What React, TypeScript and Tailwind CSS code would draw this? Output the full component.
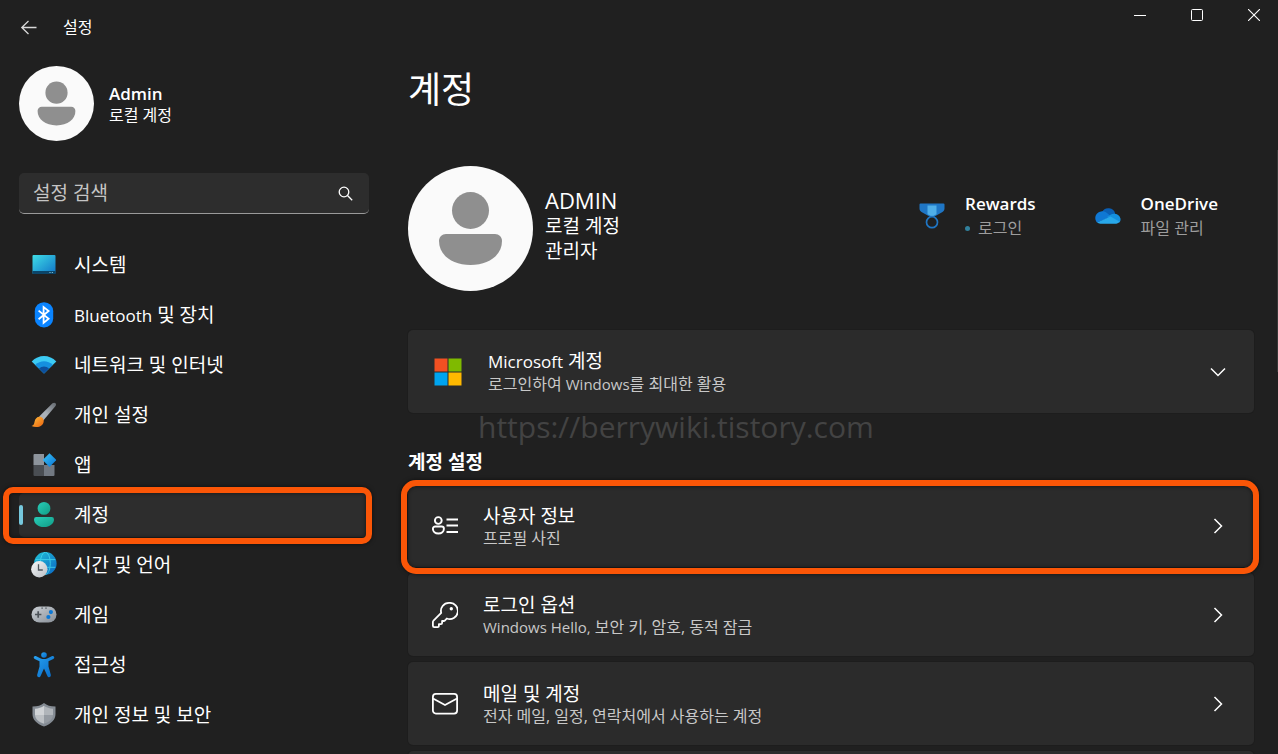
import type { ReactNode } from "react";

function SystemIcon() {
    return (
        <svg width="26" height="26" viewBox="0 0 26 26" aria-hidden="true">
            <defs>
                <linearGradient id="system" x1="0" y1="0" x2="1" y2="1">
                    <stop offset="0" stopColor="#3fdde6" />
                    <stop offset="1" stopColor="#1074c8" />
                </linearGradient>
            </defs>
            <rect x="1.5" y="3" width="23" height="19" rx="1" fill="url(#system)" />
            <path d="M1.5 19h23v2a1 1 0 0 1-1 1h-21a1 1 0 0 1-1-1z" fill="#0b4569" />
            <path d="M18.5 20h1v1h-1zM20.8 20h1v1h-1z" fill="#8fd3ea" />
        </svg>
    );
}

function BluetoothIcon() {
    return (
        <svg width="26" height="26" viewBox="0 0 26 26" aria-hidden="true">
            <rect x="3.8" y="0.2" width="18.4" height="25.3" rx="9" fill="#0a84ff" />
            <path d="M7.6 8.6l10 8.2-5 4.1V5l5 4-10 8.2" fill="none" stroke="#fff" strokeWidth="1.8" />
        </svg>
    );
}

function NetworkIcon() {
    return (
        <svg width="26" height="26" viewBox="0 0 26 26" aria-hidden="true">
            <path d="M0.7 9.5C7.5 2.1 18.5 2.1 25.3 9.5L13 21.5z" fill="#3ccbf4" />
            <path d="M4.3 12.9c4.9-5 12.5-5 17.4 0L13 21.5z" fill="#1590df" />
            <path d="M8 16.5c2.9-2.7 7.1-2.7 10 0l-5 5z" fill="#0d4f9c" />
        </svg>
    );
}

function BrushIcon() {
    return (
        <svg width="26" height="26" viewBox="0 0 26 26" aria-hidden="true">
            <defs>
                <linearGradient id="handle" x1="1" y1="0" x2="0.4" y2="0.6">
                    <stop offset="0" stopColor="#62676d" />
                    <stop offset="1" stopColor="#aab1b8" />
                </linearGradient>
                <linearGradient id="bristle" x1="0" y1="0" x2="1" y2="1">
                    <stop offset="0" stopColor="#ffbe3b" />
                    <stop offset="1" stopColor="#ea6310" />
                </linearGradient>
            </defs>
            <path d="M8.2 14.5L21.5 1.3c2.3-1.7 4.6.3 3 2.7L12.3 18.5z" fill="url(#handle)" />
            <path d="M0.5 24c1.800-.5 2.700-1.600 3-4 .5-4 3.500-6 6.500-5 3 1.200 3.500 4.700 1.700 7.200-2.400 3.400-7.700 3.600-11.200 1.800z" fill="url(#bristle)" />
        </svg>
    );
}

function AppsIcon() {
    return (
        <svg width="26" height="26" viewBox="0 0 26 26" aria-hidden="true">
            <defs>
                <linearGradient id="diamond" x1="0" y1="0" x2="1" y2="1">
                    <stop offset="0" stopColor="#3cc5f7" />
                    <stop offset="1" stopColor="#0873d3" />
                </linearGradient>
            </defs>
            <path d="M3.5 2H13v11H2.500V3a1 1 0 0 1 1-1z" fill="#8d949c" />
            <path d="M2.5 13H13v11H3.500a1 1 0 0 1-1-1z" fill="#4a4e53" />
            <path d="M13 13h10.5v10a1 1 0 0 1-1 1H13z" fill="#727982" />
            <path d="M18.500 1.200l6.400 6.300a.9.900 0 0 1 0 1.100l-6.400 6.400-6.300-6.400a.9.900 0 0 1 0-1.100z" fill="url(#diamond)" />
        </svg>
    );
}

function AccountIcon() {
    return (
        <svg width="26" height="26" viewBox="0 0 26 26" aria-hidden="true">
            <defs>
                <linearGradient id="account" x1="0" y1="0" x2="1" y2="1">
                    <stop offset="0" stopColor="#29cdb8" />
                    <stop offset="1" stopColor="#109c86" />
                </linearGradient>
            </defs>
            <circle cx="13" cy="6.4" r="6.4" fill="url(#account)" />
            <path d="M5.5 15h15a2.400 2.400 0 0 1 2.500 2.400c0 4-4.300 7.600-10 7.600S3 21.400 3 17.400A2.400 2.400 0 0 1 5.500 15z" fill="url(#account)" />
        </svg>
    );
}

function TimeIcon() {
    return (
        <svg width="26" height="26" viewBox="0 0 26 26" aria-hidden="true">
            <defs>
                <linearGradient id="globe" x1="0" y1="0" x2="1" y2="1">
                    <stop offset="0" stopColor="#22c3d8" />
                    <stop offset="1" stopColor="#0a66c4" />
                </linearGradient>
                <linearGradient id="clock" x1="0" y1="0" x2="1" y2="1">
                    <stop offset="0" stopColor="#f7f8f9" />
                    <stop offset="1" stopColor="#b9bec4" />
                </linearGradient>
            </defs>
            <circle cx="14.3" cy="11.4" r="11.3" fill="url(#globe)" />
            <g fill="none" stroke="#45d8ee" strokeWidth="1" opacity=".8">
                <path d="M4.5 7.6h19.8M4.5 15.3h19.8" />
                <ellipse cx="14.3" cy="11.4" rx="5" ry="11.2" />
            </g>
            <circle cx="8.3" cy="17.2" r="8.2" fill="url(#clock)" />
            <path d="M7.5 12.2V18h4.3" fill="none" stroke="#4f565d" strokeWidth="1.3" />
        </svg>
    );
}

function GameIcon() {
    return (
        <svg width="26" height="26" viewBox="0 0 26 26" aria-hidden="true">
            <defs>
                <linearGradient id="pad" x1="0" y1="0" x2="1" y2="1">
                    <stop offset="0" stopColor="#ccd1d6" />
                    <stop offset="1" stopColor="#878e96" />
                </linearGradient>
            </defs>
            <rect x="0.5" y="4.5" width="25" height="16" rx="8" fill="url(#pad)" />
            <path d="M7.2 9.3v6.4M4 12.5h6.400" stroke="#4d5359" strokeWidth="1.7" />
            <circle cx="19.9" cy="10.1" r="2.1" fill="#0b78d6" />
            <circle cx="17.4" cy="15" r="2.1" fill="#0b78d6" />
            <path d="M10.5 5.500h1.200v1.200h-1.200zM14.400 5.500h1.200v1.200h-1.200z" fill="#3e4449" />
        </svg>
    );
}

function AccessibilityIcon() {
    return (
        <svg width="26" height="26" viewBox="0 0 26 26" aria-hidden="true">
            <defs>
                <linearGradient id="person" x1="0" y1="0" x2="1" y2="1">
                    <stop offset="0" stopColor="#28a2f2" />
                    <stop offset="1" stopColor="#0669c6" />
                </linearGradient>
            </defs>
            <circle cx="13" cy="3" r="2.8" fill="url(#person)" />
            <path d="M4.800 4.100l5 2.300c2 .7 4.400.7 6.400 0l5-2.300c2-.6 2.900 2 1.100 2.900l-4.800 2.200v5.300l2.300 8.300c.5 2.700-2.600 3.400-3.400 1.200L13 16.500l-3.400 7.500c-.8 2.200-3.900 1.500-3.400-1.200l2.300-8.300V9.200L3.700 7c-1.800-.9-.9-3.500 1.100-2.900z" fill="url(#person)" />
        </svg>
    );
}

function ShieldIcon() {
    return (
        <svg width="26" height="26" viewBox="0 0 26 26" aria-hidden="true">
            <path d="M13 1c2.800 2.400 6.500 3.500 11.500 3.500V12c0 5.500-4 9.800-11.500 12.500C5.500 21.800 1.500 17.500 1.500 12V4.500C6.500 4.500 10.200 3.400 13 1z" fill="#858c94" />
            <path d="M13 3.800V13H4V6.800c3.500-.2 6.500-1.200 9-3z" fill="#d0d3d6" />
            <path d="M13 3.800V13h9V6.800c-3.500-.2-6.500-1.200-9-3z" fill="#b0b5ba" />
            <path d="M4 13h9v8.800C7.500 19.800 4.300 17 4 13z" fill="#bcc0c4" />
            <path d="M22 13h-9v8.800c5.500-2 8.700-4.800 9-8.800z" fill="#959ba2" />
        </svg>
    );
}

function ProfileIcon() {
    return (
        <svg width="26" height="26" viewBox="0 0 26 26" fill="none" stroke="#fff" strokeWidth="1.9" aria-hidden="true">
            <circle cx="6.3" cy="7.5" r="3.4" />
            <path d="M3.200 13.500h6.400a2.300 2.300 0 0 1 2.300 2.300c0 2.800-2.300 4.700-5.500 4.700S.9 18.600.9 15.800a2.300 2.300 0 0 1 2.300-2.300z" />
            <path d="M14.5 6.500H26M14.500 12.500H26M14.500 19H26" />
        </svg>
    );
}

function KeyIcon() {
    return (
        <svg width="26" height="26" viewBox="0 0 26 26" fill="none" stroke="#fff" strokeWidth="1.8" strokeLinejoin="round" aria-hidden="true">
            <path d="M17 .9a8 8 0 0 0-7.800 10L1.500 18.700a1.800 1.800 0 0 0-.6 1.300v3.800c0 .8.500 1.300 1.300 1.300h3.500c.7 0 1.200-.5 1.200-1.200v-1.700h2c.7 0 1.200-.5 1.200-1.200v-2h1.700c.4 0 .7-.1 1-.4l2-2.100A8.100 8.100 0 1 0 17 .9z" />
            <circle cx="19.3" cy="6.8" r="1.7" fill="#fff" stroke="none" />
        </svg>
    );
}

function MailIcon() {
    return (
        <svg width="26" height="26" viewBox="0 0 26 26" fill="none" stroke="#fff" strokeWidth="1.8" aria-hidden="true">
            <rect x="0.9" y="2.9" width="24.2" height="19.7" rx="3" />
            <path d="M1 7.500l12 6.500 12-6.500" strokeLinejoin="round" />
        </svg>
    );
}

function MicrosoftLogo() {
    return (
        <svg width="28" height="28" viewBox="0 0 28 28" aria-hidden="true">
            <path d="M.5.5h13v13H.5z" fill="#f25022" />
            <path d="M14.500.5h13v13h-13z" fill="#7fba00" />
            <path d="M.5 14.500h13v13H.5z" fill="#00a4ef" />
            <path d="M14.500 14.500h13v13h-13z" fill="#ffb900" />
        </svg>
    );
}

function RewardsIcon() {
    return (
        <svg width="26" height="26" viewBox="0 0 26 26" aria-hidden="true">
            <path d="M1.5.5h23a1 1 0 0 1 1 1v4c0 1.500-.7 2.600-2 3.400l-8 4.600h-5l-8-4.600c-1.300-.8-2-1.900-2-3.400v-4a1 1 0 0 1 1-1z" fill="#1f76c5" />
            <path d="M8.500 2.500h9v8.700L13 13.500l-4.500-2.300z" fill="#4faee8" />
            <circle cx="13" cy="19.2" r="5.500" fill="#202020" stroke="#1f76c5" strokeWidth="1.7" />
        </svg>
    );
}

function OneDriveIcon() {
    return (
        <svg width="26" height="26" viewBox="0 0 26 26" aria-hidden="true">
            <path d="M7 9.200a7 7 0 0 1 13.200 1.600L16 16z" fill="#0a5fb4" />
            <path d="M6.200 8.500c3-.6 5 1 7 2.500l3 3L2 19.500C-1.600 15.500.8 9 6.200 8.500z" fill="#0f78d4" />
            <path d="M15.500 11.800c3.300-2.200 9-1 10 3.700.3 1.700-.2 3-1.200 4L12 14z" fill="#1490df" />
            <path d="M2 19.600l13.500-6.100 9.200 5.300a4.400 4.400 0 0 1-3.400 1.900H5.800A5.500 5.500 0 0 1 2 19.600z" fill="#28a8ea" />
        </svg>
    );
}

function Chevron({ down }: { down?: boolean }) {
    return (
        <svg width="16" height="16" viewBox="0 0 16 16" fill="none" stroke="#fff" strokeWidth="1.5" aria-hidden="true">
            <path d={down ? "M1 4.500l7 7 7-7" : "M4.500 1l7 7-7 7"} />
        </svg>
    );
}

function Avatar({ className }: { className: string }) {
    return (
        <svg className={className} viewBox="0 0 125 125" role="img" aria-label="프로필 사진">
            <circle cx="62.5" cy="62.5" r="62.5" fill="#fafafa" />
            <circle cx="62.5" cy="44.5" r="18.5" fill="#8f8f8f" />
            <path d="M38 68h49c4 0 7 3 7 7 0 14-13 24-31.500 24S31 89 31 75c0-4 3-7 7-7z" fill="#8f8f8f" />
        </svg>
    );
}

// Orange frame drawn around an item to call it out
function Highlight({ className }: { className: string }) {
    return (
        <span
            className={`absolute z-10 border-6 border-[#fb5607] shadow-[0_0_4px_rgba(0,0,0,0.6),inset_0_0_4px_rgba(0,0,0,0.6)] pointer-events-none ${className}`}
        />
    );
}

const navItems: { label: ReactNode; icon: ReactNode; active?: boolean }[] = [
    { label: "시스템", icon: <SystemIcon /> },
    { label: <><span className="text-[17px]">Bluetooth</span> 및 장치</>, icon: <BluetoothIcon /> },
    { label: "네트워크 및 인터넷", icon: <NetworkIcon /> },
    { label: "개인 설정", icon: <BrushIcon /> },
    { label: "앱", icon: <AppsIcon /> },
    { label: "계정", icon: <AccountIcon />, active: true },
    { label: "시간 및 언어", icon: <TimeIcon /> },
    { label: "게임", icon: <GameIcon /> },
    { label: "접근성", icon: <AccessibilityIcon /> },
    { label: "개인 정보 및 보안", icon: <ShieldIcon /> },
];

const settings: { title: string; detail: ReactNode; icon: ReactNode; highlighted?: boolean }[] = [
    { title: "사용자 정보", detail: "프로필 사진", icon: <ProfileIcon />, highlighted: true },
    { title: "로그인 옵션", detail: <><span className="text-[15px]">Windows Hello,</span> 보안 키, 암호, 동적 잠금</>, icon: <KeyIcon /> },
    { title: "메일 및 계정", detail: "전자 메일, 일정, 연락처에서 사용하는 계정", icon: <MailIcon /> },
];

function TitleBar() {
    return (
        <header className="flex justify-between items-start h-[54px] shrink-0 pl-[19px]">
            <div className="flex items-center h-[53px] gap-6">
                <button aria-label="뒤로" className="w-5 h-5">
                    <svg width="20" height="20" viewBox="0 0 20 20" fill="none" stroke="#d8d8d8" strokeWidth="1.3">
                        <path d="M17.500 10.500H2.800M9.500 4L2.800 10.500 9.500 17" />
                    </svg>
                </button>
                <span className="text-base leading-6">설정</span>
            </div>
            <div className="flex gap-[9px]">
                <button aria-label="최소화" className="flex justify-center items-center w-12 h-[30px]">
                    <svg width="12" height="12" viewBox="0 0 12 12"><path d="M0 6.500h12" stroke="#fff" /></svg>
                </button>
                <button aria-label="최대화" className="flex justify-center items-center w-12 h-[30px]">
                    <svg width="12" height="12" viewBox="0 0 12 12"><rect x=".5" y=".5" width="11" height="11" rx="1" fill="none" stroke="#fff" /></svg>
                </button>
                <button aria-label="닫기" className="flex justify-center items-center w-12 h-[30px]">
                    <svg width="12" height="12" viewBox="0 0 12 12"><path d="M0 0l12 12M12 0L0 12" stroke="#fff" strokeWidth="1.1" /></svg>
                </button>
            </div>
        </header>
    );
}

function Sidebar() {
    return (
        <aside className="w-[350px] shrink-0 pt-3">
            <div className="flex items-center gap-[15px]">
                <Avatar className="w-[75px] h-[75px]" />
                <div>
                    <p className="text-[17px] leading-[22px] font-semibold">Admin</p>
                    <p className="text-base leading-5">로컬 계정</p>
                </div>
            </div>

            {/* Search */}
            <div className="flex items-center mt-8 h-[41px] pl-[14px] pr-4 bg-[#2d2d2d] border-b border-[#9a9a9a] rounded-[5px]">
                <input
                    type="text"
                    aria-label="설정 검색"
                    placeholder="설정 검색"
                    className="flex-1 min-w-0 bg-transparent text-[19px] leading-7 outline-none placeholder:text-[#c5c5c5]"
                />
                <button aria-label="검색">
                    <svg width="15" height="15" viewBox="0 0 15 15" fill="none" stroke="#fff" strokeWidth="1.3">
                        <circle cx="6" cy="6" r="4.8" />
                        <path d="M9.5 9.500l4.700 4.700" />
                    </svg>
                </button>
            </div>

            <nav className="flex flex-col gap-[6px] mt-[29px]">
                {navItems.map((item, i) => (
                    <a
                        key={i}
                        href="#"
                        aria-current={item.active ? "page" : undefined}
                        className={`relative flex items-center gap-[17px] h-11 shrink-0 pl-3 rounded-[5px] ${item.active ? "bg-[#2d2d2d]" : ""}`}
                    >
                        {item.active && <span className="absolute left-0 top-3 w-1 h-5 rounded-full bg-[#76c8dd]" />}
                        {item.icon}
                        <span className="text-[19px] leading-7">{item.label}</span>
                        {item.active && <Highlight className="-left-4 -right-[3px] -top-[6px] -bottom-[7px] rounded-[10px]" />}
                    </a>
                ))}
            </nav>
        </aside>
    );
}

export default function App() {
    return (
        <div className="relative flex flex-col h-screen overflow-hidden bg-[#202020] text-white font-['Open_Sans','Noto_Sans_CJK_KR',sans-serif]">
            <TitleBar />
            <div className="flex flex-1 min-h-0 gap-[39px] pl-[19px] pr-6">
                <Sidebar />
                <main className="flex-1 min-w-0 pt-3">
                    <h1 className="text-[36px] leading-[48px]">계정</h1>

                    {/* Profile */}
                    <div className="flex justify-between items-center mt-[52px]">
                        <div className="flex items-center gap-3">
                            <Avatar className="w-[125px] h-[125px]" />
                            <div className="pb-[7px]">
                                <p className="text-[22px] leading-7">ADMIN</p>
                                <p className="text-[19px] leading-[25px]">로컬 계정</p>
                                <p className="text-[19px] leading-[25px]">관리자</p>
                            </div>
                        </div>
                        <div className="flex gap-[59px] pb-[26px] pr-9">
                            <a href="#" className="flex items-center gap-5">
                                <RewardsIcon />
                                <span className="flex flex-col">
                                    <span className="text-[17px] leading-[25px] font-semibold">Rewards</span>
                                    <span className="flex items-center gap-2 text-base leading-[25px] text-[#9d9d9d]">
                                        <span className="w-[5px] h-[5px] rounded-full bg-[#31809c]" />
                                        로그인
                                    </span>
                                </span>
                            </a>
                            <a href="#" className="flex items-center gap-5">
                                <OneDriveIcon />
                                <span className="flex flex-col">
                                    <span className="text-[17px] leading-[25px] font-semibold">OneDrive</span>
                                    <span className="text-base leading-[25px] text-[#9d9d9d]">파일 관리</span>
                                </span>
                            </a>
                        </div>
                    </div>

                    <button className="flex items-center w-full h-[83px] mt-[39px] pl-[26px] pr-7 text-left bg-[#2b2b2b] shadow-[0_0_0_1px_#1d1d1d] rounded-[5px]">
                        <MicrosoftLogo />
                        <span className="flex flex-col flex-1 pl-[26px]">
                            <span className="text-[19px] leading-6"><span className="text-[17px]">Microsoft</span> 계정</span>
                            <span className="text-base leading-5 text-[#c8c8c8]">로그인하여 <span className="text-[15px]">Windows</span>를 최대한 활용</span>
                        </span>
                        <Chevron down />
                    </button>

                    <p className="pl-[70px] pb-2 text-[30px] leading-7 text-[#434343]">https://berrywiki.tistory.com</p>

                    <h2 className="text-[19px] leading-[26px] font-bold">계정 설정</h2>
                    <div className="flex flex-col gap-[6px] mt-[9px]">
                        {settings.map((item) => (
                            <div key={item.title} className="relative">
                                <button className="flex items-center w-full h-[83px] pl-6 pr-7 text-left bg-[#2b2b2b] shadow-[0_0_0_1px_#1d1d1d] rounded-[5px]">
                                    {item.icon}
                                    <span className="flex flex-col flex-1 pl-[25px]">
                                        <span className="text-[19px] leading-6">{item.title}</span>
                                        <span className="text-base leading-5 text-[#c8c8c8]">{item.detail}</span>
                                    </span>
                                    <Chevron />
                                </button>
                                {item.highlighted && <Highlight className="-left-[7px] -right-[5px] -top-1 -bottom-[7px] rounded-[15px]" />}
                            </div>
                        ))}
                        <div className="h-[83px] bg-[#2b2b2b] shadow-[0_0_0_1px_#1d1d1d] rounded-[5px]" />
                    </div>
                </main>
            </div>
            {/* Scrollbar thumb */}
            <div className="absolute right-0 top-[150px] w-px h-[222px] bg-[#383838]" />
        </div>
    );
}
